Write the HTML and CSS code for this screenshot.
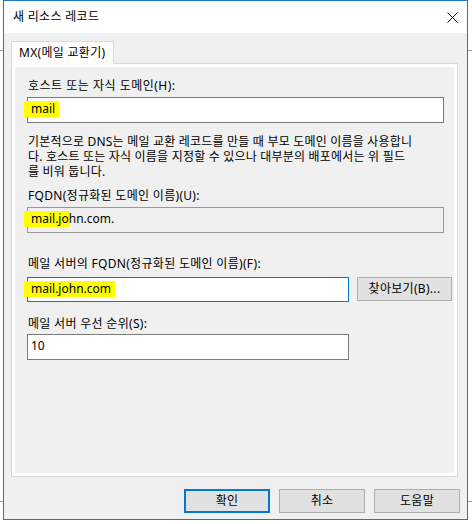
FILE: index.html
```html
<!DOCTYPE html>
<html lang="ko">
<head>
<meta charset="utf-8">
<title>새 리소스 레코드</title>
<link rel="stylesheet" href="styles.css">
</head>
<body>
<div class="window">
  <div class="titlebar">
    <span class="title">새 리소스 레코드</span>
    <svg class="close" width="11" height="11" viewBox="0 0 11 11"><path d="M0.5 0.5L10.5 10.5M10.5 0.5L0.5 10.5" stroke="#000" stroke-width="1" fill="none"/></svg>
  </div>
  <div class="body">
    <div class="tabs"><div class="tab">MX(메일 교환기)</div></div>
    <div class="panel">
      <div class="page">
        <div class="label l1">호스트 또는 자식 도메인(H):</div>
        <div class="field f1"><span class="hl hl1">mail</span></div>
        <div class="desc">
          <div>기본적으로 DNS는 메일 교환 레코드를 만들 때 부모 도메인 이름을 사용합니</div>
          <div>다. 호스트 또는 자식 이름을 지정할 수 있으나 대부분의 배포에서는 위 필드</div>
          <div>를 비워 둡니다.</div>
        </div>
        <div class="label l2">FQDN(정규화된 도메인 이름)(U):</div>
        <div class="field ro"><span class="hl hl2">mail.jo</span>hn.com.</div>
        <div class="label l3">메일 서버의 FQDN(정규화된 도메인 이름)(F):</div>
        <div class="row">
          <div class="field focus"><span class="hl hl3">mail.john.com</span></div>
          <div class="btn browse">찾아보기(B)...</div>
        </div>
        <div class="label l4">메일 서버 우선 순위(S):</div>
        <div class="field short">10</div>
      </div>
    </div>
    <div class="buttons">
      <div class="btn ok">확인</div>
      <div class="btn">취소</div>
      <div class="btn">도움말</div>
    </div>
  </div>
</div>
</body>
</html>
```
FILE: styles.css
```css
html, body {
  margin: 0;
  padding: 0;
}
body {
  width: 472px;
  height: 524px;
  overflow: hidden;
  background-color: #ffffff;
  background-image:
    linear-gradient(#a0a0a0, #a0a0a0),
    linear-gradient(#a0a0a0, #a0a0a0);
  background-repeat: no-repeat;
  background-size: 472px 1px, 472px 1px;
  background-position: 0 50px, 0 501px;
  font-family: "Noto Sans", "Noto Sans CJK KR", sans-serif;
  font-size: 12px;
  letter-spacing: 0.3px;
  color: #000;
}
.window {
  box-sizing: border-box;
  width: 465px;
  height: 520px;
  margin-left: 3px;
  border: 1px solid #1b78c9;
  display: flex;
  flex-direction: column;
  background: #f0f0f0;
}
.titlebar {
  height: 32px;
  background: #fff;
  display: flex;
  align-items: center;
  justify-content: space-between;
  padding: 0 9px 0 9px;
  flex: none;
}
.title {
  line-height: 16px;
}
.close {
  display: block;
  margin-top: 1px;
}
.body {
  flex: 1;
  padding: 8px 7px 0 7px;
  display: flex;
  flex-direction: column;
}
.tabs {
  display: flex;
}
.tab {
  position: relative;
  z-index: 1;
  box-sizing: border-box;
  height: 23px;
  margin-bottom: -1px;
  padding: 2px 8px 0 7px;
  line-height: 18px;
  background: #fff;
  border: 1px solid #d9d9d9;
  border-bottom: none;
  white-space: nowrap;
}
.panel {
  box-sizing: border-box;
  width: 447px;
  height: 414px;
  border: 1px solid #d9d9d9;
  background: #fff;
  padding: 3px;
}
.page {
  height: 100%;
  background: #f0f0f0;
  padding: 0 0 0 12px;
  display: flex;
  flex-direction: column;
  align-items: flex-start;
}
.label {
  line-height: 16px;
  padding-left: 1px;
  white-space: nowrap;
}
.l1 { margin-top: 11px; letter-spacing: 0.5px; }
.l2 { margin-top: 9px; }
.l3 { margin-top: 23px; }
.l4 { margin-top: 14px; }
.field {
  box-sizing: border-box;
  width: 417px;
  height: 26px;
  margin-top: 3px;
  border: 1px solid #7a7a7a;
  background: #fff;
  padding: 0 0 0 3px;
  line-height: 22px;
  white-space: nowrap;
  letter-spacing: 0;
}
.ro {
  background: #f0f0f0;
  border-color: #999;
}
.desc {
  margin-top: 11px;
  line-height: 15px;
  padding-left: 1px;
  white-space: nowrap;
  letter-spacing: 0.2px;
}
.row {
  display: flex;
  align-items: flex-start;
  gap: 8px;
  margin-top: 5px;
}
.row .field {
  width: 322px;
  height: 25px;
  margin-top: 0;
}
.focus {
  border-color: #0078d7;
}
.short {
  width: 322px;
  margin-top: 2px;
}
.hl {
  background: #ffff00;
  margin-left: -7px;
  padding: 0 4px 0 7px;
  display: inline-block;
  line-height: 16px;
}
.hl2 { padding-right: 0; }
.btn {
  box-sizing: border-box;
  height: 24px;
  background: #e1e1e1;
  border: 1px solid #adadad;
  text-align: center;
  line-height: 21px;
  white-space: nowrap;
}
.browse {
  width: 95px;
}
.buttons {
  display: flex;
  justify-content: flex-end;
  gap: 9px;
  margin-top: 12px;
}
.buttons .btn {
  width: 86px;
}
.ok {
  border: 2px solid #0078d7;
  line-height: 19px;
}
```
